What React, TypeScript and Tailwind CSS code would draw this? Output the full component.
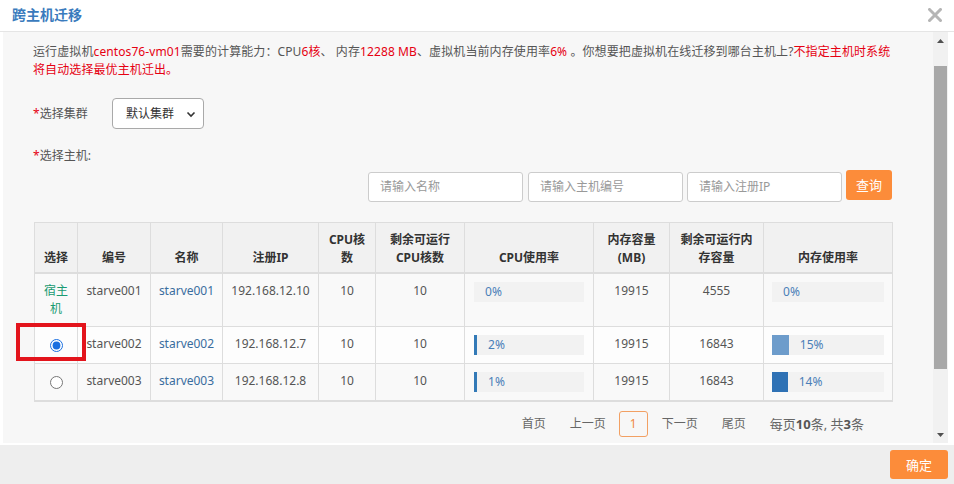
import React from "react";

const COLS = [43, 73, 72, 96, 57, 89, 129, 76, 94, 129];

const HOSTS = [
  { id: "starve001", ip: "192.168.12.10", cpu: 10, cpuFree: 10, cpuUse: 0, mem: 19915, memFree: 4555, memUse: 0, memColor: "", host: true, checked: false, bg: "bg-[#f9f9f9]" },
  { id: "starve002", ip: "192.168.12.7", cpu: 10, cpuFree: 10, cpuUse: 2, mem: 19915, memFree: 16843, memUse: 15, memColor: "#6d9ccb", host: false, checked: true, bg: "bg-[#fdfdfd]" },
  { id: "starve003", ip: "192.168.12.8", cpu: 10, cpuFree: 10, cpuUse: 1, mem: 19915, memFree: 16843, memUse: 14, memColor: "#2f72b5", host: false, checked: false, bg: "bg-[#f9f9f9]" },
];

function Bar({ pct, color }: { pct: number; color: string }) {
  return (
    <div className="flex h-5 items-center bg-[#f2f2f2]">
      {pct > 0 && (
        <div className="h-full" style={{ width: `${pct}%`, minWidth: 3, backgroundColor: color }} />
      )}
      <span className="ml-[11px] text-[#4a7fb8]">{pct}%</span>
    </div>
  );
}

const th = "border border-[#dddddd] border-b-2 px-1 pt-[8px] pb-[5px] align-bottom font-bold text-[#333]";
const td = "border border-[#dddddd] px-1 pt-2 pb-2 align-top";

export default function App() {
  return (
    <div className="relative flex h-[484px] w-[954px] flex-col overflow-hidden bg-white font-['Noto_Sans','Noto_Sans_CJK_SC',sans-serif] text-[12px] leading-[18px] text-[#555]">
      {/* Title bar */}
      <div className="flex h-[32px] shrink-0 items-center justify-between border-b border-[#e5e5e5] pl-3 pr-[12px]">
        <span className="pb-[2px] text-[14px] font-bold text-[#3a7bbd]">跨主机迁移</span>
        <svg width="14" height="14" viewBox="0 0 14 14" className="mb-[2px]">
          <path d="M1.5 1.5 L12.5 12.5 M12.5 1.5 L1.5 12.5" stroke="#b5b5b5" strokeWidth="3" strokeLinecap="square" />
        </svg>
      </div>

      {/* Body */}
      <div className="flex h-[411px] shrink-0">
        <div className="w-[3px] shrink-0" />
        <div className="flex-1 overflow-hidden bg-[#f7f7f7] pl-[30px] pr-[41px] pt-[11px]">
          <p className="whitespace-nowrap tracking-[0.1px]">
            运行虚拟机<span className="text-[#e60012]">centos76-vm01</span>需要的计算能力：CPU
            <span className="text-[#e60012]">6核</span>、 内存<span className="text-[#e60012]">12288 MB</span>
            、虚拟机当前内存使用率<span className="text-[#e60012]">6%</span> 。你想要把虚拟机在线迁移到哪台主机上?
            <span className="text-[#e60012]">不指定主机时系统</span>
            <br />
            <span className="text-[#e60012]">将自动选择最优主机迁出。</span>
          </p>

          <div className="mt-[19px] flex items-center">
            <span className="w-[79px]">
              <span className="text-[#e60012]">*</span>选择集群
            </span>
            <div className="flex h-[31px] w-[92px] items-center justify-between rounded-[4px] border border-[#a9a9a9] bg-white pl-[13px] pr-[7px] text-[#333]">
              <span>默认集群</span>
              <svg width="10" height="10" viewBox="0 0 10 10">
                <path d="M1.5 3.5 L5 7 L8.5 3.5" fill="none" stroke="#333" strokeWidth="1.6" />
              </svg>
            </div>
          </div>

          <div className="mt-[18px]">
            <span className="text-[#e60012]">*</span>选择主机:
          </div>

          <div className="mt-[5px] flex items-start justify-end">
            <div className="mt-[2px] flex h-[30px] w-[155px] items-center rounded-[3px] border border-[#cccccc] bg-white pl-[11px] text-[#999]">请输入名称</div>
            <div className="ml-[5px] mt-[2px] flex h-[30px] w-[155px] items-center rounded-[3px] border border-[#cccccc] bg-white pl-[11px] text-[#999]">请输入主机编号</div>
            <div className="ml-[4px] mt-[2px] flex h-[30px] w-[155px] items-center rounded-[3px] border border-[#cccccc] bg-white pl-[11px] text-[#999]">请输入注册IP</div>
            <div className="ml-[4px] flex h-[30px] w-[46px] items-center justify-center rounded-[3px] bg-[#fc8c3a] text-[13px] text-white">查询</div>
          </div>

          <table className="ml-px mt-[20px] w-[858px] table-fixed border-collapse border-b-2 border-[#dddddd] text-center">
            <colgroup>
              {COLS.map((w, i) => (
                <col key={i} style={{ width: w }} />
              ))}
            </colgroup>
            <thead>
              <tr className="bg-[#f1f1f1]">
                <th className={th}>选择</th>
                <th className={th}>编号</th>
                <th className={th}>名称</th>
                <th className={th}>注册IP</th>
                <th className={th}>CPU核<br />数</th>
                <th className={th}>剩余可运行<br />CPU核数</th>
                <th className={th}>CPU使用率</th>
                <th className={th}>内存容量<br />(MB)</th>
                <th className={th}>剩余可运行内<br />存容量</th>
                <th className={th}>内存使用率</th>
              </tr>
            </thead>
            <tbody>
              {HOSTS.map((h) => (
                <tr key={h.id} className={h.bg}>
                  <td className={td}>
                    {h.host ? (
                      <div className="h-[36px] overflow-hidden text-[#1a9b72]">宿主<br />机</div>
                    ) : (
                      <input
                        type="radio"
                        name="host"
                        readOnly
                        checked={h.checked}
                        className="mx-auto mb-0 mt-[4px] block h-[13px] w-[13px] accent-[#1a6fe0]"
                      />
                    )}
                  </td>
                  <td className={td}>{h.id}</td>
                  <td className={`${td} text-[#3a6d9e]`}>{h.id}</td>
                  <td className={td}>{h.ip}</td>
                  <td className={td}>{h.cpu}</td>
                  <td className={td}>{h.cpuFree}</td>
                  <td className={`${td} px-[9px] text-left`}>
                    <Bar pct={h.cpuUse} color="#337ab7" />
                  </td>
                  <td className={td}>{h.mem}</td>
                  <td className={td}>{h.memFree}</td>
                  <td className={`${td} px-[8px] text-left`}>
                    <Bar pct={h.memUse} color={h.memColor} />
                  </td>
                </tr>
              ))}
            </tbody>
          </table>

          <div className="mt-[9px] flex items-center justify-end pr-[28px] text-[#666]">
            <span>首页</span>
            <span className="ml-[24px]">上一页</span>
            <span className="ml-[13px] flex h-[26px] w-[29px] items-center justify-center rounded-[3px] border border-[#f2a063] text-[#f0883e]">1</span>
            <span className="ml-[14px]">下一页</span>
            <span className="ml-[24px]">尾页</span>
            <span className="ml-[24px] text-[13px]">
              每页<b className="text-[#555]">10</b>条, 共<b className="text-[#555]">3</b>条
            </span>
          </div>
        </div>

        {/* Scrollbar */}
        <div className="flex w-[15px] shrink-0 flex-col bg-[#f1f1f1]">
          <div className="flex h-[17px] items-center justify-center">
            <svg width="7" height="4" viewBox="0 0 7 4"><path d="M0 4 L3.5 0 L7 4 Z" fill="#505050" /></svg>
          </div>
          <div className="mx-px mt-[17px] h-[303px] bg-[#a8a8a8]" />
          <div className="flex-1" />
          <div className="flex h-[17px] items-center justify-center">
            <svg width="7" height="4" viewBox="0 0 7 4"><path d="M0 0 L7 0 L3.5 4 Z" fill="#505050" /></svg>
          </div>
        </div>
        <div className="w-[6px] shrink-0" />
      </div>

      {/* Footer */}
      <div className="mt-[2px] flex flex-1 items-start justify-end bg-[#eeeeee] pr-[6px] pt-[5px]">
        <div className="flex h-[29px] w-[58px] items-center justify-center rounded-[3px] bg-[#fc8c3a] text-[13px] text-white">确定</div>
      </div>

      {/* Annotation box */}
      <div className="absolute left-[16px] top-[323px] h-[38px] w-[70px] border-4 border-[#e3141c]" />
    </div>
  );
}
